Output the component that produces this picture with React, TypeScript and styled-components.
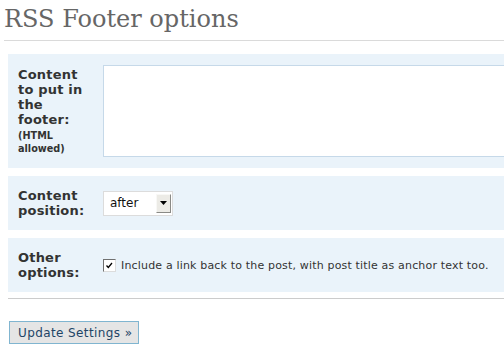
import React from 'react';
import styled, { createGlobalStyle } from 'styled-components';

const Global = createGlobalStyle`
    html, body {
        margin: 0;
        padding: 0;
        background: #fff;
        overflow: hidden;
    }
    body {
        font-family: 'DejaVu Sans', Verdana, sans-serif;
        color: #333;
    }
`;

const Wrap = styled.div`
    width: 660px;
    padding-left: 8px;
`;

const Title = styled.h2`
    margin: 0 0 13px -4px;
    padding: 5px 0 7px 0;
    font-family: 'DejaVu Serif', Georgia, serif;
    font-weight: normal;
    font-size: 24px;
    line-height: 28px;
    color: #666;
    border-bottom: 1px solid #dadada;
`;

const Table = styled.div`
    display: flex;
    flex-direction: column;
    gap: 8px;
`;

const Row = styled.div<{ $top?: boolean }>`
    display: grid;
    grid-template-columns: 70px 1fr;
    column-gap: 15px;
    align-items: ${(p) => (p.$top ? 'start' : 'center')};
    min-height: 54px;
    box-sizing: border-box;
    padding: 11px 10px;
    background: #eaf3fa;
`;

const Label = styled.div<{ $top?: boolean }>`
    padding-top: ${(p) => (p.$top ? '2px' : '0')};
    font-size: 13px;
    font-weight: bold;
    line-height: 15px;
    letter-spacing: 0.2px;
    color: #333;
`;

const Note = styled.span`
    display: block;
    margin-top: 2px;
    font-size: 9.7px;
    line-height: 13px;
    letter-spacing: 0;
`;

const TextArea = styled.textarea`
    display: block;
    width: 500px;
    height: 92px;
    box-sizing: border-box;
    margin: 0;
    border: 1px solid #c6d9e9;
    background: #fff;
    resize: none;
    outline: none;
`;

const Select = styled.div`
    display: flex;
    align-items: center;
    justify-content: space-between;
    width: 70px;
    height: 25px;
    box-sizing: border-box;
    border: 1px solid #dcdcdc;
    background: #fff;
    padding: 0 1px 0 6px;
    font-size: 12px;
    color: #111;
`;

const Arrow = styled.span`
    display: flex;
    align-items: center;
    justify-content: center;
    width: 15px;
    height: 19px;
    box-sizing: border-box;
    background: #ecebe6;
    border-top: 1px solid #f8f8f6;
    border-left: 1px solid #f8f8f6;
    border-right: 1px solid #8a8a86;
    border-bottom: 1px solid #8a8a86;
`;

const Check = styled.label`
    display: flex;
    align-items: center;
    gap: 5px;
    font-size: 11px;
    letter-spacing: 0.17px;
    color: #333;
    white-space: nowrap;
`;

const Box = styled.span`
    display: flex;
    width: 13px;
    height: 13px;
    box-sizing: border-box;
    background: #fff;
    border-top: 1px solid #707070;
    border-left: 1px solid #707070;
    border-right: 1px solid #dcdcdc;
    border-bottom: 1px solid #dcdcdc;
    align-items: center;
    justify-content: center;
`;

const Submit = styled.div`
    margin-top: 6px;
    padding-top: 22px;
    border-top: 1px solid #cccccc;
`;

const Button = styled.button`
    margin: 0 0 0 1px;
    height: 23px;
    width: 130px;
    padding: 0 0 0 8px;
    text-align: left;
    font-family: 'DejaVu Sans', Verdana, sans-serif;
    font-size: 12px;
    letter-spacing: 0.4px;
    color: #224466;
    background: #e5e5e5;
    border: 1px solid #80b5d0;
    border-radius: 0;
`;

export default function App() {
    return (
        <Wrap>
            <Global />
            <Title>RSS Footer options</Title>
            <Table>
                <Row $top>
                    <Label $top>
                        Content to put in the footer:
                        <Note>(HTML allowed)</Note>
                    </Label>
                    <TextArea />
                </Row>
                <Row>
                    <Label>Content position:</Label>
                    <Select>
                        after
                        <Arrow>
                            <svg width="7" height="4" viewBox="0 0 7 4">
                                <path d="M0 0h7L3.5 4z" fill="#000" />
                            </svg>
                        </Arrow>
                    </Select>
                </Row>
                <Row>
                    <Label>Other options:</Label>
                    <Check>
                        <Box>
                            <svg width="9" height="9" viewBox="0 0 9 9">
                                <path d="M1.5 4.5l1.8 2 3.7-4.5" stroke="#000" strokeWidth="1.3" fill="none" />
                            </svg>
                        </Box>
                        Include a link back to the post, with post title as anchor text too.
                    </Check>
                </Row>
            </Table>
            <Submit>
                <Button>Update Settings »</Button>
            </Submit>
        </Wrap>
    );
}
